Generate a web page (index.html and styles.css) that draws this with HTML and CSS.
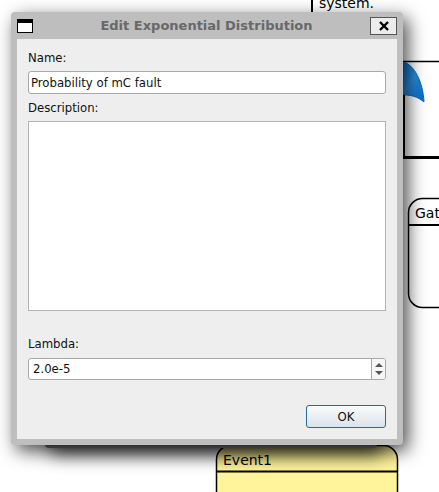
FILE: index.html
```
<!DOCTYPE html>
<html lang="en">
<head>
<meta charset="utf-8">
<title>Edit Exponential Distribution</title>
<link rel="stylesheet" href="styles.css">
</head>
<body>
<div class="canvas">
  <svg class="diagram" width="640" height="640" viewBox="0 0 640 640">
    <defs>
      <linearGradient id="blue" x1="0" y1="0" x2="1" y2="1">
        <stop offset="0" stop-color="#006fcd"/>
        <stop offset=".5" stop-color="#2c8de0"/>
        <stop offset="1" stop-color="#0068c4"/>
      </linearGradient>
    </defs>
    <path d="M312 0V40" stroke="#000" stroke-width="2"/>
    <text x="319" y="8">system.</text>
    <path d="M380 61.5H640" stroke="#000" stroke-width="1.5"/>
    <path d="M398 62H403C414 64 423 82 424 102C418 97 411 94 398 95Z" fill="url(#blue)" stroke="#0068c4"/>
    <path d="M404 95V157H640" fill="none" stroke="#000" stroke-width="2"/>
    <path d="M403 157.5H640" stroke="#000" stroke-width="3"/>
    <rect x="408.5" y="198.5" width="180" height="109" rx="14" fill="#fff" stroke="#000" stroke-width="1.5"/>
    <path d="M408 225H588" stroke="#000" stroke-width="2"/>
    <text x="415" y="218">Gat</text>
    <rect x="216.5" y="445.5" width="181" height="110" rx="14" fill="#fff39b" stroke="#000" stroke-width="1.5"/>
    <path d="M216 471.5H398" stroke="#000" stroke-width="2"/>
    <text x="223" y="465">Event1</text>
  </svg>
</div>
<main class="desktop">
  <div class="windows">
    <div class="rear-window"></div>
    <form class="dialog">
      <header class="titlebar">
        <svg class="window-icon" width="16" height="14" viewBox="0 0 16 14">
          <path d="M0 0H16V14H0Z"/><path d="M1 4H15V13H1Z" fill="#fff"/>
        </svg>
        <h1 class="title">Edit Exponential Distribution</h1>
        <button class="close" type="button" aria-label="Close">
          <svg width="10" height="10" viewBox="0 0 10 10"><path d="M1 1L9 9M9 1L1 9" stroke="#000" stroke-width="2.4"/></svg>
        </button>
      </header>
      <div class="content">
        <label class="label" for="name">Name:</label>
        <input class="field" id="name" type="text" value="Probability of mC fault">
        <label class="label" for="description">Description:</label>
        <textarea class="field description" id="description"></textarea>
        <label class="label" for="lambda">Lambda:</label>
        <div class="spinner">
          <input class="spinner-value" id="lambda" type="text" value="2.0e-5">
          <div class="steps">
            <button class="step" type="button" aria-label="Increase"><svg width="8" height="4" viewBox="0 0 8 4"><path d="M4 0L8 4H0Z"/></svg></button>
            <button class="step" type="button" aria-label="Decrease"><svg width="8" height="4" viewBox="0 0 8 4"><path d="M0 0H8L4 4Z"/></svg></button>
          </div>
        </div>
        <div class="actions"><button class="ok" type="submit">OK</button></div>
      </div>
    </form>
  </div>
</main>
</body>
</html>
```
FILE: styles.css
```
* {
  box-sizing: border-box;
}

body {
  margin: 0;
  background: #fff;
  color: #111;
  font: 13px/16px "DejaVu Sans Condensed", "DejaVu Sans", sans-serif;
}

button,
input,
textarea {
  margin: 0;
  padding: 0;
  color: inherit;
  font: inherit;
}

svg {
  display: block;
}

.canvas {
  position: absolute;
  inset: 0;
  overflow: hidden;
}

.diagram {
  font: 14px "DejaVu Sans", sans-serif;
}

.desktop {
  position: relative;
  min-height: 100vh;
  padding: 12px 36px 40px 11px;
}

.windows {
  position: relative;
}

.rear-window {
  position: absolute;
  inset: 28px 26px -3px 34px;
  border-radius: 4px;
  background: #6c6c6c;
  box-shadow: 5px 6px 18px rgba(0, 0, 0, 0.7);
}

.dialog {
  position: relative;
  padding: 0 6px 6px;
  border-radius: 4px;
  background: #bebebe;
  box-shadow: 5px 6px 18px rgba(0, 0, 0, 0.7);
}

.titlebar {
  display: flex;
  align-items: center;
  height: 27px;
}

.title {
  flex: 1;
  margin: 0;
  padding-left: 10px;
  color: #686868;
  font: bold 13px/16px "DejaVu Sans", sans-serif;
  text-align: center;
}

.close {
  display: grid;
  place-items: center;
  width: 27px;
  height: 18px;
  border: 1px solid #555;
  background: #ececec;
}

.content {
  display: flex;
  flex-direction: column;
  padding: 11px;
  background: #eee;
}

.label {
  margin-bottom: 5px;
}

.field {
  width: 100%;
  height: 23px;
  margin-bottom: 6px;
  padding: 0 2px;
  border: 1px solid #a9a9a9;
  border-radius: 3px;
  background: #fff;
}

.description {
  height: 190px;
  margin-bottom: 25px;
  border-color: #b4b4b4;
  border-radius: 0;
  resize: none;
}

.spinner {
  display: flex;
  height: 22px;
  margin-top: 1px;
  border: 1px solid #a9a9a9;
  border-radius: 3px;
  background: #fff;
}

.spinner-value {
  flex: 1;
  min-width: 0;
  padding: 0 4px;
  border: 0;
  background: none;
}

.steps {
  display: flex;
  flex-direction: column;
  justify-content: center;
  gap: 4px;
  width: 14px;
  border-left: 1px solid #a9a9a9;
  border-radius: 0 2px 2px 0;
  background: #f6f6f6;
}

.step {
  display: grid;
  place-items: center;
  border: 0;
  background: none;
}

.step svg {
  fill: #555;
}

.actions {
  display: flex;
  justify-content: flex-end;
  margin-top: 25px;
}

.ok {
  width: 80px;
  height: 23px;
  border: 1px solid #216d9b;
  border-radius: 3px;
  background: linear-gradient(#fafbfc, #dce2e9);
}
```
